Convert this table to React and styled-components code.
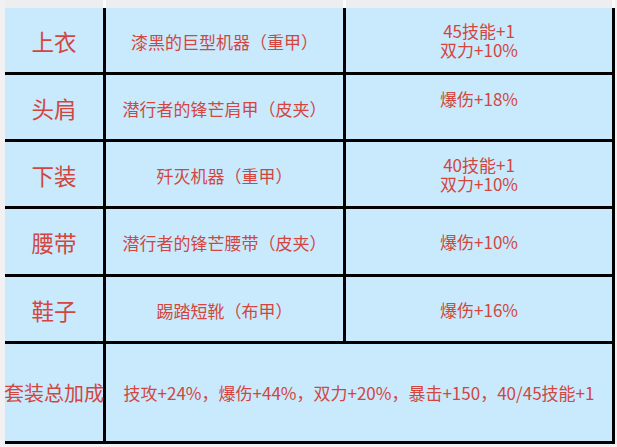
import React from "react"
import styled, { createGlobalStyle } from "styled-components"

const GlobalStyle = createGlobalStyle`
    html, body {
        margin: 0;
        padding: 0;
        background: #f1f1f3;
        font-family: "Noto Sans CJK SC", "Noto Sans", Roboto, sans-serif;
    }
`

const Page = styled.div`
    width: 617px;
    height: 447px;
    overflow: hidden;
    padding-left: 5px;
    box-sizing: border-box;
`

const HeaderStrip = styled.div`
    display: grid;
    grid-template-columns: 98px 237px 266px;
    column-gap: 3px;
    height: 8px;
    width: 610px;
    background: #fbfbfc;
`

const HeaderCell = styled.div`
    background: #eeeef1;
`

const Grid = styled.div`
    display: grid;
    grid-template-columns: 98px 237px 266px;
    grid-template-rows: 64px 64px 64px 65px 64px 97px;
    gap: 3px;
    width: 610px;
    padding: 0 3px 3px 0;
    box-sizing: border-box;
    background: #000;
`

const Cell = styled.div`
    background: #c8eafc;
    color: #d2463f;
    display: flex;
    align-items: center;
    justify-content: center;
    text-align: center;
    white-space: pre-line;
    grid-column: ${props => (props.span ? `span ${props.span}` : "auto")};
`

const Label = styled(Cell)`
    font-size: ${props => (props.long ? "20px" : "22.5px")};
    white-space: nowrap;
    padding-top: ${props => (props.long ? "0" : "1px")};
`

const Item = styled(Cell)`
    font-size: 17px;
    padding-top: 2px;
`

const Bonus = styled(Cell)`
    font-size: 17px;
    line-height: 19px;
    padding-bottom: ${props => (props.single ? "17px" : "0")};
`

const Total = styled(Cell)`
    font-size: 17px;
`

const rows = [
    { slot: "上衣", item: "漆黑的巨型机器（重甲）", bonus: "45技能+1\n双力+10%" },
    { slot: "头肩", item: "潜行者的锋芒肩甲（皮夹）", bonus: "爆伤+18%", single: true },
    { slot: "下装", item: "歼灭机器（重甲）", bonus: "40技能+1\n双力+10%" },
    { slot: "腰带", item: "潜行者的锋芒腰带（皮夹）", bonus: "爆伤+10%" },
    { slot: "鞋子", item: "踢踏短靴（布甲）", bonus: "爆伤+16%" },
]

export default function App() {
    return (
        <Page>
            <GlobalStyle />
            <HeaderStrip>
                <HeaderCell />
                <HeaderCell />
                <HeaderCell />
            </HeaderStrip>
            <Grid>
                {rows.map(row => (
                    <React.Fragment key={row.slot}>
                        <Label>{row.slot}</Label>
                        <Item>{row.item}</Item>
                        <Bonus single={row.single}>{row.bonus}</Bonus>
                    </React.Fragment>
                ))}
                <Label long>套装总加成</Label>
                <Total span={2}>技攻+24%，爆伤+44%，双力+20%，暴击+150，40/45技能+1</Total>
            </Grid>
        </Page>
    )
}
